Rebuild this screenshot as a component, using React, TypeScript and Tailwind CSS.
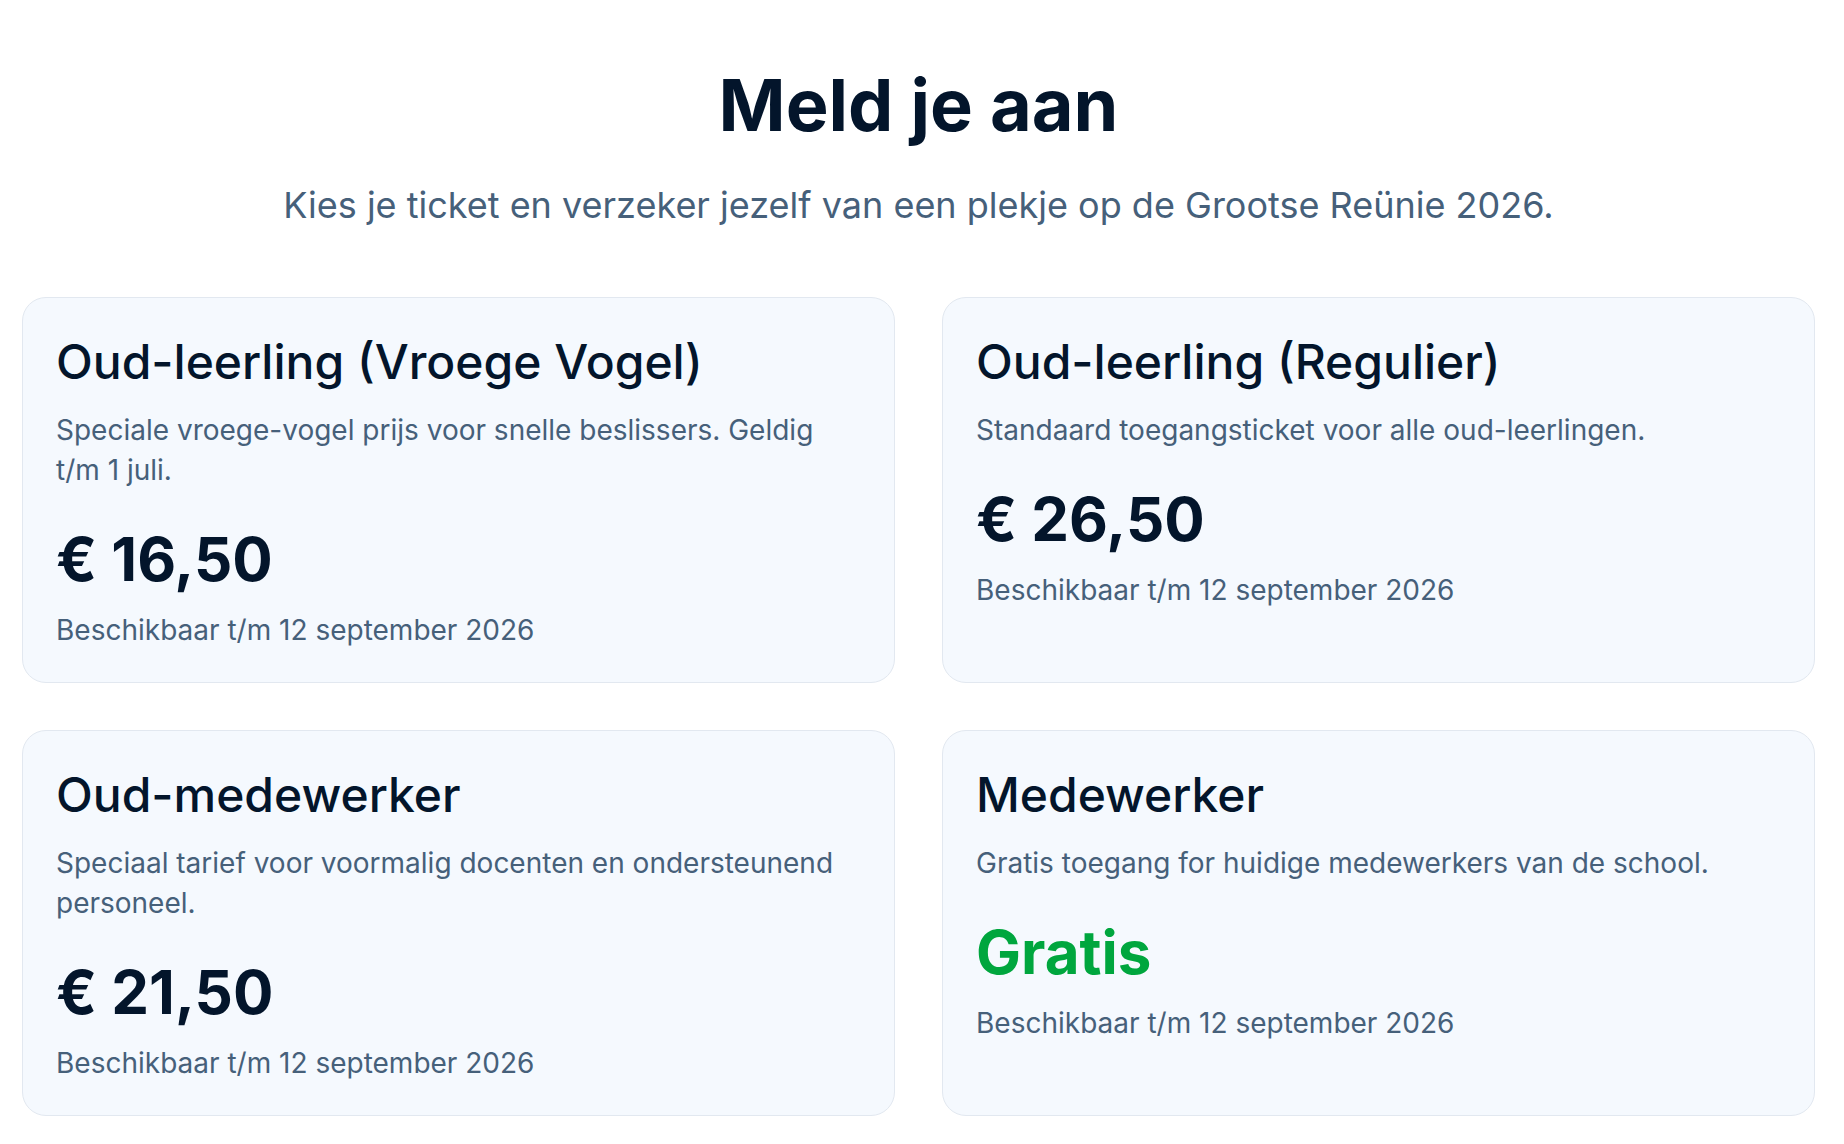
const tickets = [
  {
    name: 'Oud-leerling (Vroege Vogel)',
    description: 'Speciale vroege-vogel prijs voor snelle beslissers. Geldig t/m 1 juli.',
    price: '€ 16,50',
    free: false,
  },
  {
    name: 'Oud-leerling (Regulier)',
    description: 'Standaard toegangsticket voor alle oud-leerlingen.',
    price: '€ 26,50',
    free: false,
  },
  {
    name: 'Oud-medewerker',
    description: 'Speciaal tarief voor voormalig docenten en ondersteunend personeel.',
    price: '€ 21,50',
    free: false,
  },
  {
    name: 'Medewerker',
    description: 'Gratis toegang for huidige medewerkers van de school.',
    price: 'Gratis',
    free: true,
  },
];

const App = () => {
  return (
    <main className="min-h-screen bg-white pl-[22px] pr-[29px] pt-[69px] pb-10 font-['Inter',sans-serif]">
      <header className="text-center">
        <h1 className="text-[72px] leading-none font-bold text-[#03152b]">Meld je aan</h1>
        <p className="mt-[44px] text-[36px] leading-[40px] text-[#46607a]">
          Kies je ticket en verzeker jezelf van een plekje op de Grootse Reünie 2026.
        </p>
      </header>

      <section className="mt-[72px] grid grid-cols-2 gap-[47px]">
        {tickets.map((t) => (
          <div
            key={t.name}
            className="rounded-3xl border border-[#e2e8f0] bg-[#f5f9fe] px-[33px] pt-[36px] pb-[34px]"
          >
            <h2 className="text-[48px] leading-[56px] font-medium text-[#03152b]">{t.name}</h2>
            <p className="mt-[20px] text-[28px] leading-[40px] text-[#46607a]">{t.description}</p>
            <div
              className={`mt-[33px] text-[60px] leading-[72px] font-bold ${
                t.free ? 'text-[#00a63e]' : 'text-[#03152b]'
              }`}
            >
              {t.price}
            </div>
            <p className="mt-[17px] text-[28px] leading-[36px] text-[#46607a]">
              Beschikbaar t/m 12 september 2026
            </p>
          </div>
        ))}
      </section>
    </main>
  );
};

export default App;
